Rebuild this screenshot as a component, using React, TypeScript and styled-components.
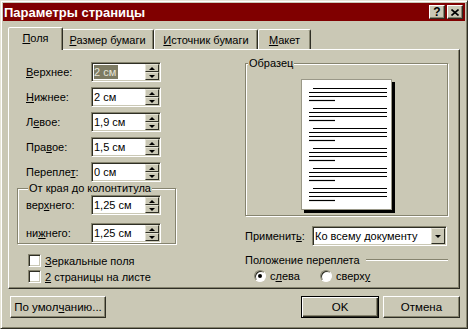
import styled, { createGlobalStyle } from 'styled-components'

const FACE = '#cac8b5'
const SHADOW = '#86846f'
const DARK = '#2e2e24'
const LIGHT = '#ffffff'
const HILITE = '#e6e4d6'

const GlobalStyle = createGlobalStyle`
  html, body { margin: 0; padding: 0; background: ${FACE}; }
  body { font-family: "Liberation Sans", Arial, sans-serif; font-size: 11px; color: #000; }
  * { box-sizing: border-box; }
`

const Window = styled.div`
  width: 468px;
  height: 329px;
  background: ${FACE};
  border: 1px solid;
  border-color: ${HILITE} ${DARK} ${DARK} ${HILITE};
  box-shadow: inset 1px 1px ${LIGHT}, inset -1px -1px ${SHADOW};
  padding: 2px;
  display: flex;
  flex-direction: column;
`
const TitleBar = styled.div`
  height: 18px;
  background: #800000;
  color: #fff;
  display: flex;
  align-items: center;
  padding: 0 2px 0 1px;
  font-weight: bold;
  font-size: 13px;
`
const Title = styled.span`
  flex: 1;
`
const TitleButton = styled.div`
  width: 16px;
  height: 14px;
  background: ${FACE};
  border: 1px solid;
  border-color: ${LIGHT} ${DARK} ${DARK} ${LIGHT};
  box-shadow: inset -1px -1px ${SHADOW};
  display: flex;
  align-items: center;
  justify-content: center;
  color: #000;
  font-size: 12px;
  font-weight: bold;
  & + & { margin-left: 2px; }
`
const Body = styled.div`
  flex: 1;
  padding: 6px 5px 0;
  display: flex;
  flex-direction: column;
`
const TabStrip = styled.div`
  display: flex;
  align-items: flex-end;
  height: 22px;
  padding-left: 2px;
  position: relative;
  z-index: 1;
`
const Tab = styled.div<{ $active?: boolean; $w: number }>`
  width: ${p => p.$w + (p.$active ? 4 : 0)}px;
  height: ${p => (p.$active ? 23 : 20)}px;
  margin: ${p => (p.$active ? '0 -2px -1px' : '0')};
  background: ${FACE};
  border: 1px solid;
  border-bottom: none;
  border-color: ${LIGHT} ${DARK} transparent ${LIGHT};
  border-radius: 2px 2px 0 0;
  box-shadow: inset -1px 0 ${SHADOW};
  display: flex;
  align-items: center;
  justify-content: center;
  padding-bottom: ${p => (p.$active ? 2 : 0)}px;
  position: relative;
  z-index: ${p => (p.$active ? 2 : 1)};
`
const Mn = styled.span`
  text-decoration: underline;
`
const Panel = styled.div`
  height: 240px;
  border: 1px solid;
  border-color: ${LIGHT} ${DARK} ${DARK} ${LIGHT};
  box-shadow: inset -1px -1px ${SHADOW};
  display: flex;
`
const LeftCol = styled.div`
  width: 236px;
  padding-top: 12px;
  display: flex;
  flex-direction: column;
`
const FieldList = styled.div`
  display: flex;
  flex-direction: column;
  gap: 5px;
  padding-left: 17px;
`
const FieldRow = styled.div`
  display: flex;
  align-items: center;
  height: 20px;
`
const FieldLabel = styled.span`
  width: 65px;
`
const Sunken = styled.div`
  background: #fff;
  border: 1px solid;
  border-color: ${SHADOW} ${LIGHT} ${LIGHT} ${SHADOW};
  box-shadow: inset 1px 1px ${DARK}, inset -1px -1px ${FACE};
  padding: 1px;
`
const SpinBox = styled(Sunken)`
  width: 70px;
  height: 20px;
  display: flex;
`
const SpinText = styled.div`
  flex: 1;
  display: flex;
  align-items: center;
  padding-left: 1px;
`
const Selected = styled.span`
  background: #7d7b63;
  color: ${HILITE};
  padding: 1px 2px 1px 0;
`
const Spinner = styled.div`
  width: 14px;
  display: flex;
  flex-direction: column;
`
const SpinBtn = styled.div<{ $up?: boolean }>`
  flex: 1;
  background: ${FACE};
  border: 1px solid;
  border-color: ${HILITE} ${DARK} ${DARK} ${HILITE};
  display: flex;
  align-items: center;
  justify-content: center;
  &::after {
    content: '';
    border-left: 3px solid transparent;
    border-right: 3px solid transparent;
    ${p => (p.$up ? 'border-bottom: 3px solid #000;' : 'border-top: 3px solid #000;')}
  }
`
const Group = styled.fieldset<{ $w: number; $h: number }>`
  width: ${p => p.$w}px;
  height: ${p => p.$h}px;
  margin: 0;
  padding: 0;
  border: 1px solid ${SHADOW};
  box-shadow: 1px 1px 0 ${LIGHT}, inset 1px 1px 0 ${LIGHT};
`
const Legend = styled.legend`
  padding: 0 1px;
  margin-left: 2px;
  background: ${FACE};
  line-height: 13px;
`
const MarginGroup = styled(Group)`
  margin: 0 0 0 8px;
  padding: 0 0 0 8px;
  display: flex;
  flex-direction: column;
  gap: 8px;
`
const CheckList = styled.div`
  margin: 10px 0 0 19px;
  display: flex;
  flex-direction: column;
  gap: 3px;
`
const CheckRow = styled.div`
  display: flex;
  align-items: center;
  height: 13px;
  gap: 4px;
`
const CheckBox = styled(Sunken)`
  width: 13px;
  height: 13px;
`
const RightCol = styled.div`
  width: 203px;
  padding-top: 7px;
  display: flex;
  flex-direction: column;
`
const PreviewGroup = styled(Group)`
  display: flex;
  justify-content: center;
  padding-top: 9px;
`
const Page = styled.div`
  width: 91px;
  height: 131px;
  background: #fff;
  border: 1px solid #9a9888;
  box-shadow: 3px 3px 0 #000;
`
const ApplyRow = styled.div`
  margin-top: 10px;
  display: flex;
  align-items: center;
`
const ApplyLabel = styled.span`
  width: 67px;
`
const Select = styled(Sunken)`
  width: 135px;
  height: 20px;
  display: flex;
`
const SelectText = styled.div`
  flex: 1;
  display: flex;
  align-items: center;
  padding-left: 1px;
`
const DropBtn = styled.div`
  width: 14px;
  background: ${FACE};
  border: 1px solid;
  border-color: ${HILITE} ${DARK} ${DARK} ${HILITE};
  display: flex;
  align-items: center;
  justify-content: center;
  &::after {
    content: '';
    border-left: 3px solid transparent;
    border-right: 3px solid transparent;
    border-top: 3px solid #000;
  }
`
const Heading = styled.div`
  margin-top: 8px;
  display: flex;
  align-items: center;
  gap: 6px;
`
const EtchedLine = styled.div`
  flex: 1;
  height: 2px;
  border-top: 1px solid ${SHADOW};
  border-bottom: 1px solid ${LIGHT};
`
const RadioRow = styled.div`
  margin-top: 3px;
  padding-left: 9px;
  display: flex;
  align-items: center;
  height: 14px;
`
const RadioItem = styled.label<{ $w: number }>`
  width: ${p => p.$w}px;
  display: flex;
  align-items: center;
  gap: 4px;
`
const Radio = styled.span<{ $on?: boolean }>`
  width: 12px;
  height: 12px;
  border-radius: 50%;
  background: #fff;
  border: 1px solid;
  border-color: ${SHADOW} ${LIGHT} ${LIGHT} ${SHADOW};
  box-shadow: inset 1px 1px ${DARK};
  display: flex;
  align-items: center;
  justify-content: center;
  &::after {
    content: '';
    width: 4px;
    height: 4px;
    border-radius: 50%;
    background: ${p => (p.$on ? '#000' : 'transparent')};
  }
`
const ButtonRow = styled.div`
  margin-top: 7px;
  display: flex;
  gap: 4px;
`
const Button = styled.div<{ $w: number; $default?: boolean }>`
  width: ${p => p.$w}px;
  height: 22px;
  background: ${FACE};
  border: 1px solid;
  border-color: ${p => (p.$default ? '#000' : `${LIGHT} ${DARK} ${DARK} ${LIGHT}`)};
  box-shadow: ${p =>
    p.$default
      ? `inset 1px 1px ${LIGHT}, inset -1px -1px ${DARK}, inset -2px -2px ${SHADOW}`
      : `inset -1px -1px ${SHADOW}`};
  display: flex;
  align-items: center;
  justify-content: center;
  font-size: 11.5px;
`
const Spacer = styled.div`
  flex: 1;
`

function SpinField({ label, value, selected }: { label: React.ReactNode; value: string; selected?: boolean }) {
  return (
    <FieldRow>
      <FieldLabel>{label}</FieldLabel>
      <SpinBox>
        <SpinText>{selected ? <Selected>{value}</Selected> : value}</SpinText>
        <Spinner>
          <SpinBtn $up />
          <SpinBtn />
        </Spinner>
      </SpinBox>
    </FieldRow>
  )
}

function PageLines() {
  const groups = [0, 1, 2, 3, 4, 5]
  return (
    <svg width="89" height="129" viewBox="0 0 89 129">
      {groups.map(g => {
        const y = 8.5 + g * 20
        return (
          <g key={g} stroke="#000" strokeWidth="1.2">
            <line x1="11" x2="85" y1={y} y2={y} />
            <line x1="7" x2="85" y1={y + 4} y2={y + 4} />
            <line x1="7" x2="85" y1={y + 8} y2={y + 8} />
            <line x1="7" x2="33" y1={y + 12} y2={y + 12} />
          </g>
        )
      })}
    </svg>
  )
}

export default function App() {
  return (
    <>
      <GlobalStyle />
      <Window>
        <TitleBar>
          <Title>Параметры страницы</Title>
          <TitleButton>?</TitleButton>
          <TitleButton>
            <svg width="8" height="7" viewBox="0 0 8 7">
              <path d="M0.5 0.5 L7.5 6.5 M7.5 0.5 L0.5 6.5" stroke="#000" strokeWidth="1.6" />
            </svg>
          </TitleButton>
        </TitleBar>
        <Body>
          <TabStrip>
            <Tab $active $w={51}><span><Mn>П</Mn>оля</span></Tab>
            <Tab $w={93}><span><Mn>Р</Mn>азмер бумаги</span></Tab>
            <Tab $w={104}><span><Mn>И</Mn>сточник бумаги</span></Tab>
            <Tab $w={53}><span><Mn>М</Mn>акет</span></Tab>
          </TabStrip>
          <Panel>
            <LeftCol>
              <FieldList>
                <SpinField label={<><Mn>В</Mn>ерхнее:</>} value="2 см" selected />
                <SpinField label={<><Mn>Н</Mn>ижнее:</>} value="2 см" />
                <SpinField label={<>Л<Mn>е</Mn>вое:</>} value="1,9 см" />
                <SpinField label={<>Пра<Mn>в</Mn>ое:</>} value="1,5 см" />
                <SpinField label={<>Перепле<Mn>т</Mn>:</>} value="0 см" />
              </FieldList>
              <MarginGroup $w={159} $h={62}>
                <Legend>От края до колонтитула</Legend>
                <SpinField label={<>вер<Mn>х</Mn>него:</>} value="1,25 см" />
                <SpinField label={<>ни<Mn>ж</Mn>него:</>} value="1,25 см" />
              </MarginGroup>
              <CheckList>
                <CheckRow>
                  <CheckBox />
                  <span><Mn>З</Mn>еркальные поля</span>
                </CheckRow>
                <CheckRow>
                  <CheckBox />
                  <span><Mn>2</Mn> страницы на листе</span>
                </CheckRow>
              </CheckList>
            </LeftCol>
            <RightCol>
              <PreviewGroup $w={203} $h={159}>
                <Legend>Образец</Legend>
                <Page>
                  <PageLines />
                </Page>
              </PreviewGroup>
              <ApplyRow>
                <ApplyLabel>Применит<Mn>ь</Mn>:</ApplyLabel>
                <Select>
                  <SelectText>Ко всему документу</SelectText>
                  <DropBtn />
                </Select>
              </ApplyRow>
              <Heading>
                <span>Положение переплета</span>
                <EtchedLine />
              </Heading>
              <RadioRow>
                <RadioItem $w={66}>
                  <Radio $on />
                  <span>с<Mn>л</Mn>ева</span>
                </RadioItem>
                <RadioItem $w={70}>
                  <Radio />
                  <span>сверх<Mn>у</Mn></span>
                </RadioItem>
              </RadioRow>
            </RightCol>
          </Panel>
          <ButtonRow>
            <Button $w={96} style={{ marginLeft: 2 }}>По умол<Mn>ч</Mn>анию...</Button>
            <Spacer />
            <Button $w={78} $default>OK</Button>
            <Button $w={77}>Отмена</Button>
          </ButtonRow>
        </Body>
      </Window>
    </>
  )
}
